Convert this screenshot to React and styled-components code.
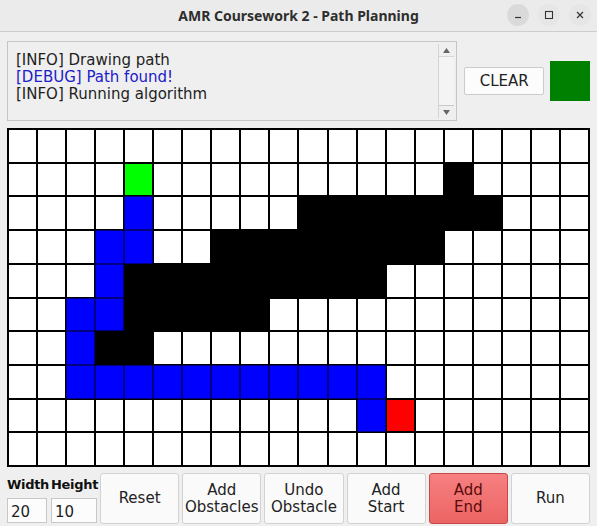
import React from 'react';
import styled, { createGlobalStyle } from 'styled-components';

const GlobalStyle = createGlobalStyle`
    html, body {
        margin: 0;
        padding: 0;
        background: #efefef;
    }
    body {
        font-family: "DejaVu Sans", "Noto Sans", sans-serif;
        color: #1e1e1e;
    }
`;

const Window = styled.div`
    width: 597px;
    height: 526px;
    display: flex;
    flex-direction: column;
    background: #efefef;
    overflow: hidden;
`;

const TitleBar = styled.div`
    height: 31px;
    flex-shrink: 0;
    display: flex;
    align-items: center;
    justify-content: center;
    position: relative;
    background: #ebebeb;
    border-bottom: 1px solid #cdcdcd;
`;

const Title = styled.div`
    font-family: "Noto Sans", "DejaVu Sans", sans-serif;
    font-weight: 700;
    font-size: 14px;
    color: #2e2e2e;
`;

const WinControls = styled.div`
    position: absolute;
    right: 6px;
    top: 4px;
    display: flex;
    gap: 9px;
`;

const WinButton = styled.div`
    width: 22px;
    height: 22px;
    border-radius: 50%;
    background: ${p => (p.$hover ? '#dadada' : '#e6e6e6')};
    display: flex;
    align-items: center;
    justify-content: center;
`;

const Content = styled.div`
    flex: 1;
    display: flex;
    flex-direction: column;
    padding: 9px 7px 0 7px;
`;

const TopRow = styled.div`
    display: flex;
    align-items: center;
    height: 80px;
`;

const LogBox = styled.div`
    width: 452px;
    height: 80px;
    box-sizing: border-box;
    border: 1px solid #c4c4c4;
    background: #efefef;
    display: flex;
`;

const LogText = styled.div`
    flex: 1;
    padding: 10px 8px;
    font-size: 15px;
    line-height: 17px;
`;

const LogLine = styled.div`
    color: ${p => (p.$debug ? '#2020c8' : '#1e1e1e')};
`;

const ScrollBar = styled.div`
    width: 15px;
    margin: 2px 2px 2px 0;
    display: flex;
    flex-direction: column;
    border-left: 1px solid #d4d4d4;
`;

const ScrollArrow = styled.div`
    height: 12px;
    display: flex;
    align-items: center;
    justify-content: center;
`;

const ScrollTrack = styled.div`
    flex: 1;
    background: #f4f4f4;
    border-top: 1px solid #d6d6d6;
    border-bottom: 1px solid #c8c8c8;
`;

const ClearButton = styled.div`
    margin-left: 7px;
    width: 80px;
    height: 28px;
    box-sizing: border-box;
    border: 1px solid #cbcbcb;
    border-radius: 2px;
    background: #fcfcfc;
    display: flex;
    align-items: center;
    justify-content: center;
    font-size: 15px;
    color: #222;
`;

const StatusSquare = styled.div`
    margin-left: 6px;
    width: 40px;
    height: 40px;
    background: #008000;
`;

const Board = styled.div`
    margin-top: 7px;
    width: 583px;
    height: 339px;
    box-sizing: border-box;
    display: grid;
    grid-template-columns: repeat(20, 1fr);
    grid-template-rows: repeat(10, 1fr);
    gap: 2px;
    padding: 2px;
    background: #000;
`;

const cellColors = {
    '.': '#ffffff',
    K: '#000000',
    B: '#0000ff',
    G: '#00ff00',
    R: '#ff0000',
};

const Cell = styled.div`
    background: ${p => cellColors[p.$kind]};
    box-shadow: ${p => (p.$kind === 'B' ? '0 0 0 0.5px #0000ff' : 'none')};
`;

const BottomRow = styled.div`
    margin-top: 6px;
    display: flex;
    gap: 3px;
    height: 51px;
    width: 583px;
`;

const SizeBlock = styled.div`
    display: grid;
    grid-template-columns: 40px 46px;
    column-gap: 4px;
    grid-template-rows: 22px 25px;
    row-gap: 3px;
`;

const SizeLabel = styled.div`
    font-weight: 700;
    font-size: 13px;
    letter-spacing: -0.3px;
    display: flex;
    align-items: center;
    color: #111;
    white-space: nowrap;
`;

const SizeInput = styled.div`
    box-sizing: border-box;
    border: 1px solid #c8c8c8;
    background: #fcfcfc;
    font-size: 15px;
    display: flex;
    align-items: center;
    padding-left: 3px;
    padding-top: 2px;
`;

const ActionButton = styled.div`
    flex: 1;
    box-sizing: border-box;
    border: 1px solid ${p => (p.$active ? '#c84848' : '#d2d2d2')};
    border-radius: 3px;
    background: ${p => (p.$active ? 'linear-gradient(#f68080, #ec6464)' : '#fafafa')};
    color: ${p => (p.$active ? '#5a0a0a' : '#222')};
    display: flex;
    align-items: center;
    justify-content: center;
    text-align: center;
    font-size: 15px;
    line-height: 17px;
`;

const rows = [
    '....................',
    '....G..........K....',
    '....B.....KKKKKKK...',
    '...BB..KKKKKKKK.....',
    '...BKKKKKKKKK.......',
    '..BBKKKKK...........',
    '..BKK...............',
    '..BBBBBBBBBBB.......',
    '............BR......',
    '....................',
];

const buttons = [
    { label: ['Reset'] },
    { label: ['Add', 'Obstacles'] },
    { label: ['Undo', 'Obstacle'] },
    { label: ['Add', 'Start'] },
    { label: ['Add', 'End'], active: true },
    { label: ['Run'] },
];

const App = () => {
    return (
        <Window>
            <GlobalStyle />
            <TitleBar>
                <Title>AMR Coursework 2 - Path Planning</Title>
                <WinControls>
                    <WinButton $hover>
                        <svg width="10" height="10" viewBox="0 0 10 10">
                            <line x1="2" y1="7.5" x2="8" y2="7.5" stroke="#333" strokeWidth="1.2" />
                        </svg>
                    </WinButton>
                    <WinButton>
                        <svg width="10" height="10" viewBox="0 0 10 10">
                            <rect x="1.5" y="1.5" width="7" height="7" fill="none" stroke="#333" strokeWidth="1.1" />
                        </svg>
                    </WinButton>
                    <WinButton>
                        <svg width="10" height="10" viewBox="0 0 10 10">
                            <path d="M2 2 L8 8 M8 2 L2 8" stroke="#333" strokeWidth="1.2" />
                        </svg>
                    </WinButton>
                </WinControls>
            </TitleBar>
            <Content>
                <TopRow>
                    <LogBox>
                        <LogText>
                            <LogLine>[INFO] Drawing path</LogLine>
                            <LogLine $debug>[DEBUG] Path found!</LogLine>
                            <LogLine>[INFO] Running algorithm</LogLine>
                        </LogText>
                        <ScrollBar>
                            <ScrollArrow>
                                <svg width="7" height="5" viewBox="0 0 7 5">
                                    <path d="M0 5 L3.5 0 L7 5 Z" fill="#666" />
                                </svg>
                            </ScrollArrow>
                            <ScrollTrack />
                            <ScrollArrow>
                                <svg width="7" height="5" viewBox="0 0 7 5">
                                    <path d="M0 0 L7 0 L3.5 5 Z" fill="#666" />
                                </svg>
                            </ScrollArrow>
                        </ScrollBar>
                    </LogBox>
                    <ClearButton>CLEAR</ClearButton>
                    <StatusSquare />
                </TopRow>
                <Board>
                    {rows.map((row, r) =>
                        row.split('').map((kind, c) => (
                            <Cell key={`${r}-${c}`} $kind={kind} />
                        ))
                    )}
                </Board>
                <BottomRow>
                    <SizeBlock>
                        <SizeLabel>Width</SizeLabel>
                        <SizeLabel>Height</SizeLabel>
                        <SizeInput>20</SizeInput>
                        <SizeInput>10</SizeInput>
                    </SizeBlock>
                    {buttons.map((b, i) => (
                        <ActionButton key={i} $active={b.active}>
                            <div>
                                {b.label.map((l, j) => (
                                    <div key={j}>{l}</div>
                                ))}
                            </div>
                        </ActionButton>
                    ))}
                </BottomRow>
            </Content>
        </Window>
    );
};

export default App;
